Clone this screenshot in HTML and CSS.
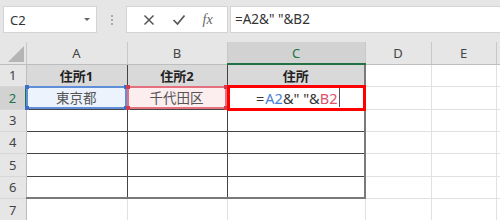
FILE: index.html
```html
<!DOCTYPE html>
<html lang="ja">
<head>
    <meta charset="UTF-8">
    <title>Excel - 住所</title>
    <link rel="stylesheet" href="styles.css">
</head>
<body>
    <div class="toolbar">
        <div class="name-box">
            <span>C2</span>
            <span class="drop-arrow"></span>
        </div>
        <div class="grip">
            <span></span><span></span><span></span>
        </div>
        <div class="func-buttons">
            <svg class="icon" width="12" height="12" viewBox="0 0 12 12">
                <path d="M1.5 1.5 L10.5 10.5 M10.5 1.5 L1.5 10.5" stroke="#555" stroke-width="1.5" fill="none"/>
            </svg>
            <svg class="icon" width="14" height="12" viewBox="0 0 14 12">
                <path d="M1.5 6 L5.5 10 L12.5 1.5" stroke="#555" stroke-width="1.7" fill="none"/>
            </svg>
            <span class="fx">fx</span>
        </div>
        <div class="formula-input">=A2&amp;" "&amp;B2</div>
    </div>

    <table class="sheet">
        <colgroup>
            <col style="width: 26px">
            <col style="width: 101px">
            <col style="width: 100px">
            <col style="width: 138px">
            <col style="width: 66px">
            <col style="width: 65px">
            <col>
        </colgroup>
        <thead>
            <tr>
                <th class="corner"><span class="corner-tri"></span></th>
                <th>A</th>
                <th>B</th>
                <th class="active-col">C</th>
                <th>D</th>
                <th>E</th>
                <th class="rest"></th>
            </tr>
        </thead>
        <tbody>
            <tr class="r1">
                <th>1</th>
                <td class="title tl">住所1</td>
                <td class="title">住所2</td>
                <td class="title tr">住所</td>
                <td></td><td></td><td class="rest"></td>
            </tr>
            <tr class="r2">
                <th class="active-row">2</th>
                <td class="ref-a"><div class="ref-box">東京都<i class="h h1"></i><i class="h h2"></i><i class="h h3"></i><i class="h h4"></i></div></td>
                <td class="ref-b"><div class="ref-box">千代田区<i class="h h1"></i><i class="h h2"></i><i class="h h3"></i><i class="h h4"></i></div></td>
                <td class="editing"><div class="edit-box"><span class="eq">=</span><span class="ra">A2</span>&amp;" "&amp;<span class="rb">B2</span><span class="caret"></span></div></td>
                <td></td><td></td><td class="rest"></td>
            </tr>
            <tr class="r3">
                <th>3</th>
                <td class="box l"></td><td class="box"></td><td class="box r"></td>
                <td></td><td></td><td class="rest"></td>
            </tr>
            <tr class="r4">
                <th>4</th>
                <td class="box l"></td><td class="box"></td><td class="box r"></td>
                <td></td><td></td><td class="rest"></td>
            </tr>
            <tr class="r5">
                <th>5</th>
                <td class="box l"></td><td class="box"></td><td class="box r"></td>
                <td></td><td></td><td class="rest"></td>
            </tr>
            <tr class="r6">
                <th>6</th>
                <td class="box l last"></td><td class="box last"></td><td class="box r last"></td>
                <td></td><td></td><td class="rest"></td>
            </tr>
            <tr class="r7">
                <th>7</th>
                <td></td><td></td><td></td>
                <td></td><td></td><td class="rest"></td>
            </tr>
        </tbody>
    </table>
</body>
</html>
```

FILE: styles.css
```css
:root {
    --bar-gray: #e6e6e6;
    --head-gray: #e6e6e6;
    --head-active: #d2d2d2;
    --grid-line: #e1e1e1;
    --head-line: #c8c8c8;
    --excel-green: #217346;
    --ref-blue: #5f8fd8;
    --ref-red: #e5707e;
}

* {
    margin: 0;
    padding: 0;
    box-sizing: border-box;
}

body {
    width: 500px;
    height: 220px;
    overflow: hidden;
    background: #fff;
    font-family: "Noto Sans", "Noto Sans CJK JP", sans-serif;
    color: #333;
}

/* formula bar */
.toolbar {
    display: flex;
    align-items: flex-start;
    height: 42px;
    padding: 6px 0 0 3px;
    background: var(--bar-gray);
}

.name-box {
    width: 94px;
    height: 27px;
    background: #fff;
    border: 1px solid #d4d4d4;
    display: flex;
    align-items: center;
    justify-content: space-between;
    padding: 0 6px 0 6px;
    font-size: 13px;
    color: #333;
}

.drop-arrow {
    width: 0;
    height: 0;
    border-left: 3px solid transparent;
    border-right: 3px solid transparent;
    border-top: 3px solid #666;
}

.grip {
    width: 29px;
    height: 27px;
    display: flex;
    flex-direction: column;
    align-items: center;
    justify-content: center;
    gap: 2px;
}

.grip span {
    width: 2px;
    height: 2px;
    background: #aaa;
}

.func-buttons {
    width: 102px;
    height: 27px;
    background: #fff;
    border: 1px solid #d4d4d4;
    display: flex;
    align-items: center;
    justify-content: space-around;
    padding: 0 6px 0 8px;
}

.fx {
    font-family: "Liberation Serif", "DejaVu Serif", serif;
    font-style: italic;
    font-size: 14px;
    color: #666;
}

.formula-input {
    flex: 1;
    height: 27px;
    margin-left: 2px;
    background: #fff;
    border: 1px solid #d4d4d4;
    border-right: none;
    padding: 3px 0 0 4px;
    font-size: 13.5px;
    color: #333;
}

/* sheet grid */
.sheet {
    border-collapse: collapse;
    table-layout: fixed;
    width: 500px;
}

.sheet th {
    background: var(--head-gray);
    font-weight: normal;
    font-size: 13px;
    color: #444;
    border-right: 1px solid var(--head-line);
    border-bottom: 1px solid #bdbdbd;
}

.sheet thead th {
    height: 22px;
    padding-top: 1px;
}

.sheet tbody th {
    border-right: 1px solid #bdbdbd;
    border-bottom: 1px solid #d6d6d6;
    text-align: center;
}

.sheet td {
    border-right: 1px solid var(--grid-line);
    border-bottom: 1px solid var(--grid-line);
    font-size: 13px;
    text-align: center;
    padding: 0;
}

.sheet th.rest,
.sheet td.rest {
    border-right: none;
}

.r1, .r3, .r4, .r6 { height: 22px; }
.r2, .r5, .r7 { height: 23px; }

.corner {
    position: relative;
}

.corner-tri {
    position: absolute;
    right: 2px;
    bottom: 2px;
    width: 0;
    height: 0;
    border-left: 16px solid transparent;
    border-bottom: 16px solid #b5b5b5;
}

.sheet thead th.active-col {
    background: var(--head-active);
    color: var(--excel-green);
    border-bottom: 2px solid var(--excel-green);
}

.sheet tbody th.active-row {
    background: var(--head-active);
    color: var(--excel-green);
    border-right: 2px solid var(--excel-green);
}

/* list table A1:C6 */
.title {
    background: #d9d9d9;
    font-weight: bold;
    color: #222;
}

.sheet td.title,
.sheet td.box {
    border-right: 1px solid #444;
    border-bottom: 1px solid #444;
}

.sheet td.tl, .sheet td.l { border-left: 1px solid #777; }
.sheet td.tr, .sheet td.r { border-right: 2px solid #7a7a7a; }
.sheet td.last { border-bottom: 2px solid #7a7a7a; }
.sheet td.title { border-top: 1px solid #bdbdbd; }

/* referenced cells */
.sheet td.ref-a,
.sheet td.ref-b {
    border-right: 1px solid #444;
    border-bottom: 1px solid #444;
    padding: 0;
}

.ref-box {
    position: relative;
    height: 23px;
    margin: -1px 0 0 -1px;
    line-height: 21px;
    font-size: 13.5px;
    color: #555;
}

.ref-a .ref-box {
    background: #edf3fc;
    border: 2px solid var(--ref-blue);
}

.ref-b .ref-box {
    background: #fcedef;
    border: 2px solid var(--ref-red);
}

.h {
    position: absolute;
    width: 4px;
    height: 4px;
}

.ref-a .h { background: #3d6fc4; }
.ref-b .h { background: #d43c4c; }

.h1 { left: -3px; top: -3px; }
.h2 { right: -3px; top: -3px; }
.h3 { left: -3px; bottom: -3px; }
.h4 { right: -3px; bottom: -3px; }

/* cell being edited */
.sheet td.editing {
    border-right: 2px solid #7a7a7a;
    border-bottom: 1px solid #444;
    padding: 0;
}

.edit-box {
    height: 26px;
    margin: -2px -2px -2px -1px;
    border: 3px solid #ff0000;
    font-size: 14.5px;
    line-height: 20px;
    color: #333;
    display: flex;
    justify-content: center;
    align-items: center;
    position: relative;
    z-index: 1;
    background: #fff;
    padding-left: 4px;
}

.eq {
    color: #333;
    margin-right: 1px;
}

.ra { color: #4a7fd6; }
.rb { color: #e0506a; }

.caret {
    width: 1px;
    height: 19px;
    background: #555;
    margin-left: 2px;
}
```
